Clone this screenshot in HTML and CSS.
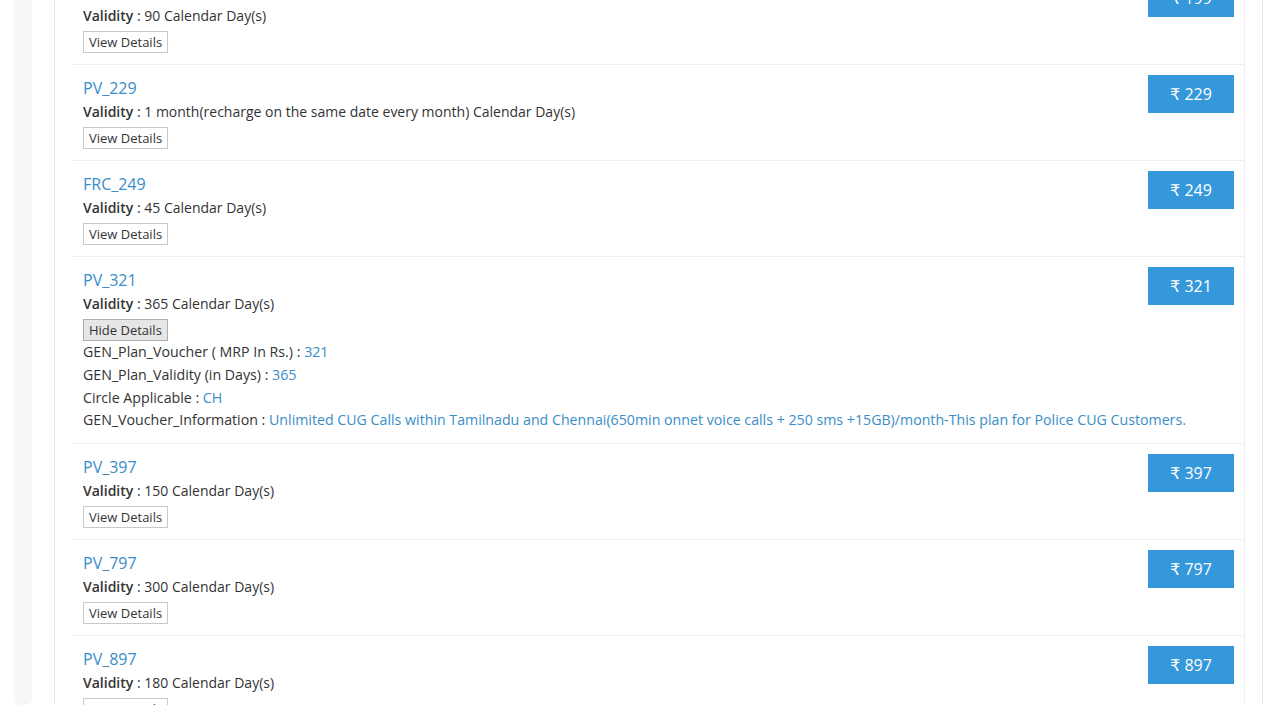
FILE: index.html
```html
<!DOCTYPE html>
<html lang="en">
<head>
    <meta charset="UTF-8">
    <meta name="viewport" content="width=device-width, initial-scale=1.0">
    <title>Plan Vouchers</title>
    <link rel="stylesheet" href="styles.css">
</head>
<body>
    <div class="page">
        <div class="side-panel"></div>
        <div class="main-box">
            <div class="plan-list">
                <div class="plan-item">
                    <a href="#" class="plan-name">PV_199</a>
                    <div class="plan-validity"><b>Validity</b> : 90 Calendar Day(s)</div>
                    <div><button class="details-btn">View Details</button></div>
                    <button class="price-btn">&#8377; 199</button>
                </div>

                <div class="plan-item">
                    <a href="#" class="plan-name">PV_229</a>
                    <div class="plan-validity"><b>Validity</b> : 1 month(recharge on the same date every month) Calendar Day(s)</div>
                    <div><button class="details-btn">View Details</button></div>
                    <button class="price-btn">&#8377; 229</button>
                </div>

                <div class="plan-item">
                    <a href="#" class="plan-name">FRC_249</a>
                    <div class="plan-validity"><b>Validity</b> : 45 Calendar Day(s)</div>
                    <div><button class="details-btn">View Details</button></div>
                    <button class="price-btn">&#8377; 249</button>
                </div>

                <div class="plan-item">
                    <a href="#" class="plan-name">PV_321</a>
                    <div class="plan-validity"><b>Validity</b> : 365 Calendar Day(s)</div>
                    <div><button class="details-btn active">Hide Details</button></div>
                    <button class="price-btn">&#8377; 321</button>
                    <div class="plan-details">
                        <div>GEN_Plan_Voucher ( MRP In Rs.) : <span class="val">321</span></div>
                        <div>GEN_Plan_Validity (in Days) : <span class="val">365</span></div>
                        <div>Circle Applicable : <span class="val">CH</span></div>
                        <div>GEN_Voucher_Information : <span class="val">Unlimited CUG Calls within Tamilnadu and Chennai(650min onnet voice calls + 250 sms +15GB)/month-This plan for Police CUG Customers.</span></div>
                    </div>
                </div>

                <div class="plan-item">
                    <a href="#" class="plan-name">PV_397</a>
                    <div class="plan-validity"><b>Validity</b> : 150 Calendar Day(s)</div>
                    <div><button class="details-btn">View Details</button></div>
                    <button class="price-btn">&#8377; 397</button>
                </div>

                <div class="plan-item">
                    <a href="#" class="plan-name">PV_797</a>
                    <div class="plan-validity"><b>Validity</b> : 300 Calendar Day(s)</div>
                    <div><button class="details-btn">View Details</button></div>
                    <button class="price-btn">&#8377; 797</button>
                </div>

                <div class="plan-item">
                    <a href="#" class="plan-name">PV_897</a>
                    <div class="plan-validity"><b>Validity</b> : 180 Calendar Day(s)</div>
                    <div><button class="details-btn">View Details</button></div>
                    <button class="price-btn">&#8377; 897</button>
                </div>
            </div>
        </div>
    </div>
</body>
</html>
```

FILE: styles.css
```css
* {
    margin: 0;
    padding: 0;
    box-sizing: border-box;
}

body {
    font-family: 'Open Sans', 'DejaVu Sans', Arial, sans-serif;
    font-size: 14px;
    color: #333;
    background: #fff;
}

.page {
    display: flex;
    height: 705px;
    overflow: hidden;
    padding-left: 14px;
}

.side-panel {
    width: 18px;
    background: #f7f7f7;
    border-radius: 0 0 6px 6px;
}

.main-box {
    width: 1209px;
    margin-left: 22px;
    padding: 0 17px;
    border-left: 1px solid #e8e8e8;
    border-right: 1px solid #e8e8e8;
}

.plan-list {
    margin-top: -31px;
    border-right: 1px solid #eee;
}

.plan-item {
    display: grid;
    grid-template-columns: 1fr auto;
    padding: 12px 10px 11px 11px;
    border-bottom: 1px solid #eee;
}

.plan-name {
    display: block;
    font-size: 16px;
    line-height: 23px;
    color: #3a8dc7;
    text-decoration: none;
}

.plan-validity {
    line-height: 23px;
}

.plan-validity b {
    font-weight: 600;
}

.details-btn {
    margin-top: 4px;
    height: 22px;
    padding: 0 5px;
    font-family: inherit;
    font-size: 13px;
    color: #333;
    background: #fff;
    border: 1px solid #c8c8c8;
    cursor: pointer;
}

.details-btn.active {
    background: #e6e6e6;
    border-color: #adadad;
}

.plan-details {
    grid-column: 1 / -1;
    font-size: 14.2px;
    line-height: 22.75px;
}

.plan-details .val {
    color: #3a8dc7;
}

.price-btn {
    grid-column: 2;
    grid-row: 1 / 4;
    align-self: start;
    margin-top: -2px;
    width: 86px;
    height: 38px;
    font-family: inherit;
    font-size: 16px;
    color: #fff;
    background: #3498db;
    border: none;
    cursor: pointer;
}
```
